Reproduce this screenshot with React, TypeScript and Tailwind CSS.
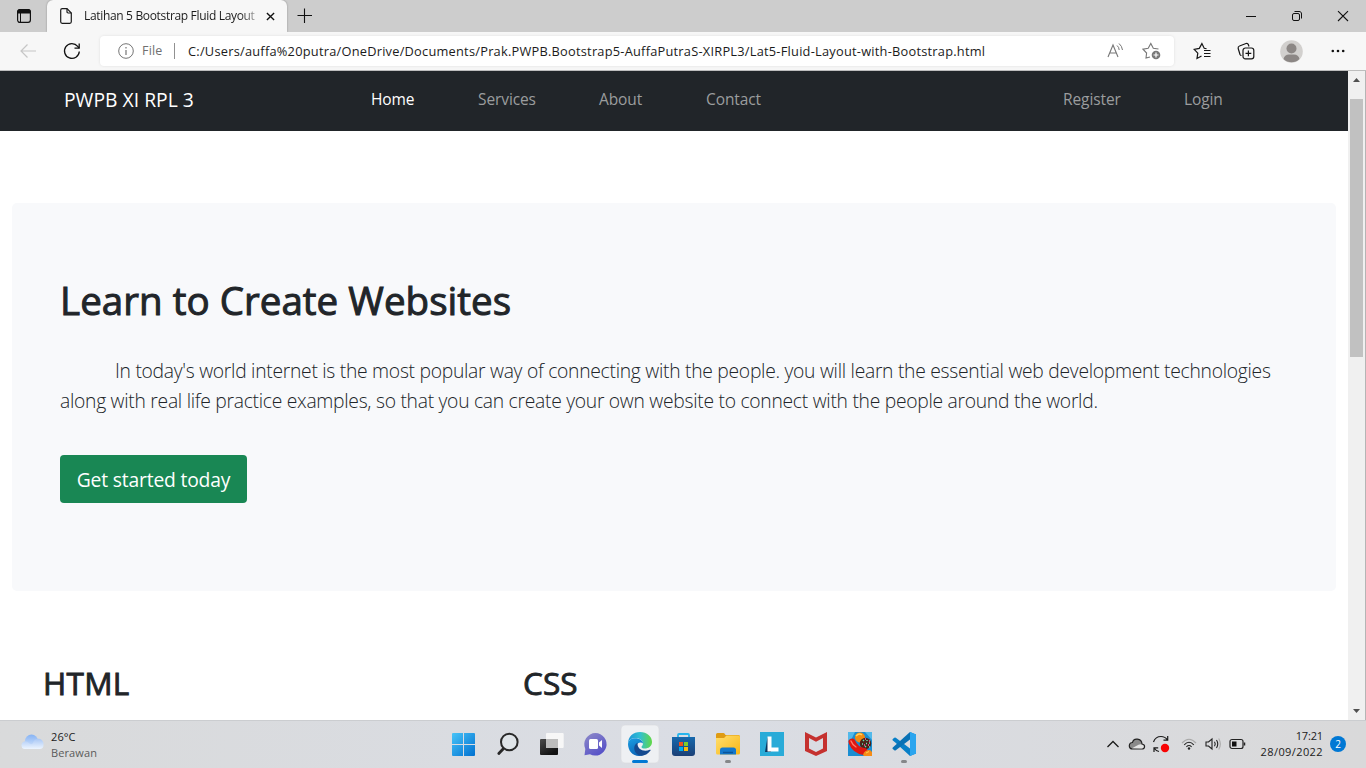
import React from "react";

function TabStrip() {
  return (
    <div className="flex h-8 items-start bg-[#cdcdcd]">
      <div className="flex h-8 w-[47px] items-center justify-center">
        <svg width="16" height="16" viewBox="0 0 16 16" fill="none" stroke="#111">
          <rect x="1.6" y="1.6" width="12.8" height="12.8" rx="2.3" strokeWidth="1.2" />
          <path d="M1.5 4.5C1.5 2.500 2.500 1.500 4 1.500H12C13.500 1.500 14.500 2.500 14.500 4.500V5H1.500Z" fill="#111" />
          <path d="M4.500 5V14" strokeWidth="1" />
        </svg>
      </div>
      <div className="flex h-8 w-[240px] items-center rounded-t-[6px] bg-[#f7f7f7] pl-3 shadow-[0_0_2px_rgba(0,0,0,0.35)]">
        <svg width="14" height="18" viewBox="0 0 14 18" fill="none" stroke="#1a1a1a" strokeWidth="1.2">
          <path d="M1.700 3.200C1.700 2.300 2.300 1.700 3.200 1.700H8L12.300 6V14.800C12.300 15.700 11.700 16.300 10.800 16.300H3.200C2.300 16.300 1.700 15.700 1.700 14.800Z" />
          <path d="M8 1.700V4.800C8 5.600 8.400 6 9.200 6H12.300" />
        </svg>
        <span className="ml-[11px] w-[173px] overflow-hidden bg-gradient-to-r from-[#1b1b1b] from-90% to-[#b8b8b8] bg-clip-text text-[12px] tracking-[-0.33px] whitespace-nowrap text-transparent">
          Latihan 5 Bootstrap Fluid Layout
        </span>
        <svg className="ml-[9px]" width="9" height="9" viewBox="0 0 10 10" stroke="#111" strokeWidth="1.500">
          <path d="M1 1L9 9M9 1L1 9" />
        </svg>
      </div>
      <svg className="mt-2 ml-[10px]" width="16" height="16" viewBox="0 0 16 16" stroke="#111" strokeWidth="1.1">
        <path d="M.500 7.500H15M7.500 .500V15" />
      </svg>
      <div className="ml-auto flex h-8 items-center">
        <svg width="46" height="32" viewBox="0 0 46 32" stroke="#111"><path d="M18 16.500H28" /></svg>
        <svg width="46" height="32" viewBox="0 0 46 32" fill="none" stroke="#111">
          <rect x="18.500" y="13.500" width="7" height="7" rx="1.500" />
          <path d="M20.500 11.500H25C26.700 11.500 27.500 12.300 27.500 14V18.500" />
        </svg>
        <svg width="46" height="32" viewBox="0 0 46 32" stroke="#111" strokeWidth="1.1"><path d="M18 11.200L28 21M28 11.200L18 21" /></svg>
      </div>
    </div>
  );
}

function Toolbar() {
  return (
    <div className="flex h-[39px] items-center border-b border-[#bdbdbd] bg-[#f7f7f7]">
      <svg className="ml-5" width="16" height="16" viewBox="0 0 16 16" fill="none" stroke="#c6c6c6" strokeWidth="1.2">
        <path d="M16 8H1M7.500 1.500L1 8L7.500 14.500" />
      </svg>
      <svg className="ml-[27px]" width="18" height="18" viewBox="0 0 18 18" fill="none" stroke="#111" strokeWidth="1.3">
        <path d="M16.300 9.500A7.400 7.400 0 1 1 14.700 4.400L16 6" />
        <path d="M16.200 1.500V6.200H11.500" />
      </svg>
      <div className="ml-[19px] flex h-[30px] w-[1074px] items-center rounded-[4px] bg-white shadow-[0_0_3px_rgba(0,0,0,0.1)]">
        <svg className="ml-[18px]" width="16" height="16" viewBox="0 0 16 16" fill="none" stroke="#757575">
          <circle cx="8" cy="8" r="7.300" />
          <path d="M8 7V12M8 4V5.400" strokeWidth="1.200" />
        </svg>
        <span className="ml-2 w-8 pt-px text-[12.500px] tracking-[0.2px] text-[#707070]">File</span>
        <span className="h-4 w-px bg-[#919191]" />
        <span className="ml-[13px] w-[799px] pt-px text-[12.8px] tracking-[0.24px] whitespace-nowrap text-[#1b1b1b]">
          C:/Users/auffa%20putra/OneDrive/Documents/Prak.PWPB.Bootstrap5-AuffaPutraS-XIRPL3/Lat5-Fluid-Layout-with-Bootstrap.html
        </span>
        <svg className="ml-[120px]" width="17" height="18" viewBox="0 0 17 18" fill="none" stroke="#777">
          <path d="M1 15L6 3L11 15M2.800 11H9.200" strokeWidth="1.1" />
          <path d="M10 3.500Q12 5 12.200 8M12 1.500Q15 4 15.500 8" />
        </svg>
        <svg className="ml-[18px]" width="19" height="18" viewBox="0 0 19 18" fill="none" stroke="#777">
          <path d="M8 15L4 16L4.600 11L1 7.200L6.200 6.300L8.800 1.500L11.300 6.300L16.500 7" strokeWidth="1.100" />
          <circle cx="14" cy="13" r="4.300" fill="#777" stroke="none" />
          <path d="M11.500 13H16.500M14 10.500V15.500" stroke="#fff" strokeWidth="1.200" />
        </svg>
      </div>
      <svg className="ml-[19px]" width="19" height="18" viewBox="0 0 19 18" fill="none" stroke="#151515" strokeWidth="1.200">
        <path d="M8.500 14L4 16.500L4.800 11.200L1.200 7.300L6.300 6.400L8.900 1.600L11.200 6.300L13.500 6.700M11 8.500H17.500M11 11.500H17.500M11 14.500H17.500" />
      </svg>
      <svg className="ml-[25px]" width="18" height="18" viewBox="0 0 18 18" fill="none" stroke="#151515" strokeWidth="1.200">
        <path d="M4.500 13.500Q3.500 13.500 3 12.500L1.200 6.500Q.800 4.500 2.500 4L9 1.500Q10.800 1 11.300 2.500L12 4.500" />
        <rect x="6" y="6" width="10.800" height="10.800" rx="2.400" />
        <path d="M8.500 11.400H14.300M11.400 8.500V14.300" />
      </svg>
      <svg className="ml-[25px]" width="23" height="23" viewBox="0 0 23 23">
        <circle cx="11.500" cy="11.500" r="11.300" fill="#d2d0ce" />
        <circle cx="11.500" cy="8.500" r="5" fill="#8c8785" />
        <path d="M3.500 19Q4.500 14.500 9 14.500H14Q18.500 14.500 19.500 19A11.300 11.300 0 0 1 3.500 19Z" fill="#8c8785" />
      </svg>
      <svg className="ml-7" width="14" height="4" viewBox="0 0 14 4" fill="#111">
        <circle cx="1.800" cy="2" r="1.300" /><circle cx="7" cy="2" r="1.300" /><circle cx="12.200" cy="2" r="1.300" />
      </svg>
    </div>
  );
}

function Navbar() {
  return (
    <nav className="flex h-[60px] shrink-0 items-center bg-[#212529] pb-[2px] pl-16 text-[15.500px] tracking-[-0.1px] whitespace-nowrap text-[#9b9d9e]">
      <a className="w-[307px] text-[19.300px] tracking-[0.02px] text-white">PWPB XI RPL 3</a>
      <a className="w-[107px] text-white">Home</a>
      <a className="w-[121px]">Services</a>
      <a className="w-[107px]">About</a>
      <a className="w-[357px]">Contact</a>
      <a className="w-[121px]">Register</a>
      <a>Login</a>
    </nav>
  );
}

function PageContent() {
  return (
    <main className="flex min-w-0 flex-1 flex-col overflow-hidden bg-white text-[#212529]">
      <Navbar />
      <section className="mt-[72px] mr-3 ml-3 h-[388px] shrink-0 rounded-[5px] bg-[#f8f9fb] px-12 pt-[73px]">
        <h1 className="text-[38.500px] leading-[48px] tracking-[0.04px] whitespace-nowrap [-webkit-text-stroke:1px_#212529]">
          Learn to Create Websites
        </h1>
        <p className="mt-[32px] text-[19.300px] leading-[30px] font-light whitespace-nowrap">
          <span className="ml-[55px] tracking-[-0.279px]">
            In today's world internet is the most popular way of connecting with the people. you will learn the essential web development technologies
          </span>
          <br />
          <span className="tracking-[-0.279px]">
            along with real life practice examples, so that you can create your own website to connect with the people around the world.
          </span>
        </p>
        <button className="mt-[39px] flex h-12 w-[187px] items-center justify-center rounded-[4px] bg-[#198754] pt-[2px] text-[19.300px] tracking-[-0.180px] whitespace-nowrap text-white">
          Get started today
        </button>
      </section>
      <div className="mt-[71px] flex pl-[43px] text-[31.500px] leading-[42px] [-webkit-text-stroke:0.9px_#212529]">
        <h2 className="w-[480px] tracking-[0.300px]">HTML</h2>
        <h2 className="tracking-[0.100px]">CSS</h2>
      </div>
    </main>
  );
}

function Scrollbar() {
  return (
    <div className="flex w-[18px] flex-col items-center border-r border-[#b5b5b5] bg-[#f0f0f0]">
      <svg width="17" height="28" viewBox="0 0 17 28" fill="#505050"><path d="M5 11L8.500 7L12 11Z" /></svg>
      <div className="h-[258px] w-[13px] bg-[#c1c1c1]" />
      <svg className="mt-auto" width="17" height="17" viewBox="0 0 17 17" fill="#505050"><path d="M5 6L8.500 10L12 6Z" /></svg>
    </div>
  );
}

function AppIcon({ children }: { children: React.ReactNode }) {
  return <svg width="44" height="48" viewBox="0 0 44 48" fill="none">{children}</svg>;
}

function TaskbarApps() {
  return (
    <div className="flex w-[484px]">
      <AppIcon>
        <defs>
          <linearGradient id="win" x1="10" y1="13" x2="33" y2="36" gradientUnits="userSpaceOnUse"><stop stopColor="#48c4f8" /><stop offset="1" stopColor="#0070d0" /></linearGradient>
        </defs>
        <path d="M11 13H21V24H10V14Q10 13 11 13ZM22 13H32Q33 13 33 14V24H22ZM10 25H21V36H11Q10 36 10 35ZM22 25H33V35Q33 36 32 36H22Z" fill="url(#win)" />
      </AppIcon>
      <AppIcon>
        <circle cx="23.300" cy="22" r="8.300" fill="#dfe4e8" stroke="#282828" strokeWidth="2" />
        <path d="M17.300 28.700L12.800 33.500" stroke="#282828" strokeWidth="2.800" strokeLinecap="round" />
      </AppIcon>
      <AppIcon>
        <defs>
          <linearGradient id="tv" x1="10" y1="19" x2="20" y2="35" gradientUnits="userSpaceOnUse"><stop stopColor="#4b4b4b" /><stop offset="1" stopColor="#111" /></linearGradient>
        </defs>
        <rect x="16" y="13" width="17.700" height="15" rx="1" fill="#f7f7f7" />
        <rect x="10" y="19" width="18" height="16" rx="1" fill="url(#tv)" />
        <rect x="16" y="19" width="12" height="9" fill="#bcbcbc" />
      </AppIcon>
      <AppIcon>
        <defs>
          <linearGradient id="chat" x1="14" y1="13" x2="29" y2="36" gradientUnits="userSpaceOnUse"><stop stopColor="#8b87c8" /><stop offset="1" stopColor="#504bc8" /></linearGradient>
        </defs>
        <path d="M21.500 13A11.300 11.300 0 1 1 16 34.300L10.500 35.300L11.300 29A11.300 11.300 0 0 1 21.500 13Z" fill="url(#chat)" />
        <rect x="15" y="19" width="9" height="10" rx="1.500" fill="#fff" />
        <path d="M25 22.500L28 20V28L25 25.500Z" fill="#fff" />
      </AppIcon>
      <AppIcon>
        <defs>
          <linearGradient id="eg1" x1="10" y1="20" x2="34" y2="20" gradientUnits="userSpaceOnUse"><stop stopColor="#1d95d7" /><stop offset=".5" stopColor="#31bfd2" /><stop offset="1" stopColor="#61d844" /></linearGradient>
          <linearGradient id="eg2" x1="12" y1="18" x2="20" y2="36" gradientUnits="userSpaceOnUse"><stop stopColor="#1b9de2" /><stop offset="1" stopColor="#0962b5" /></linearGradient>
        </defs>
        <rect x="3" y="5" width="38" height="38" rx="4" fill="#eef0f3" stroke="#d8dade" strokeWidth=".6" />
        <path d="M10 24C10 16 15.500 12 22 12C29 12 34 16.500 34 22C34 26.500 30 28.500 27 28.500C25 28.500 23.500 28 23.500 27C23.500 26 25 25.500 25 23.500C25 20 21 18 17 18C13 18 10.500 20.500 10 24Z" fill="url(#eg1)" />
        <path d="M10 24C10.500 20 13.500 18.300 17 18.300C22 18.300 25 21 25 23.500C23 21.500 18.500 22.500 18.500 27C18.500 31 22 35 26 35C17 38.500 10 32 10 24Z" fill="url(#eg2)" />
        <path d="M19.500 22.800C15 25 15.500 31 19 34C22.500 37 28.500 36 32.500 30.500C33 29.800 32.300 29.500 31.700 29.800C26 32.500 19 29.500 19.500 22.800Z" fill="#14498f" />
        <rect x="14" y="40" width="16" height="3" rx="1.500" fill="#0078d4" />
      </AppIcon>
      <AppIcon>
        <defs>
          <linearGradient id="store" x1="20" y1="17" x2="20" y2="36" gradientUnits="userSpaceOnUse"><stop stopColor="#1769ad" /><stop offset="1" stopColor="#1b3f76" /></linearGradient>
        </defs>
        <path d="M16 18V15Q16 14 17 14H26Q27 14 27 15V18" stroke="#26b5ed" strokeWidth="1.800" />
        <path d="M10 17H33V33Q33 36 30 36H13Q10 36 10 33Z" fill="url(#store)" />
        <path d="M17 22H21V26H17Z" fill="#f1511b" /><path d="M22 22H26V26H22Z" fill="#80cc28" /><path d="M17 27H21V31H17Z" fill="#00adef" /><path d="M22 27H26V31H22Z" fill="#fbbc09" />
      </AppIcon>
      <AppIcon>
        <defs>
          <linearGradient id="fold" x1="14" y1="15" x2="30" y2="35" gradientUnits="userSpaceOnUse"><stop stopColor="#ffdc68" /><stop offset="1" stopColor="#f9b91c" /></linearGradient>
        </defs>
        <path d="M10 14.500Q10 13 11.500 13H17.500Q18.500 13 19.500 15H32.500Q34 15 34 16.500V20H10Z" fill="#df9b13" />
        <path d="M10 18H18L20.500 15.500H32.500Q34 15.500 34 17V33Q34 34.500 32.500 34.500H11.500Q10 34.500 10 33Z" fill="url(#fold)" />
        <path d="M14 34.500V30Q14 27.500 16.500 27.500H27.500Q30 27.500 30 30V34.500Z" fill="#1478cc" />
        <path d="M17 32.500H27" stroke="#0a559b" strokeWidth="1.500" />
        <rect x="19" y="40" width="6" height="3" rx="1.500" fill="#858789" />
      </AppIcon>
      <AppIcon>
        <rect x="10" y="12" width="24" height="24" fill="#29abd8" />
        <path d="M17.500 17L15 32H21Z" fill="#0c355e" />
        <path d="M17.500 16.500H21.500V27.500H28.500V31.500H17.500Z" fill="#fff" />
      </AppIcon>
      <AppIcon>
        <path d="M11 12L22 17.500L33 12V31L22 36L11 31ZM15 18V28.500L22 32L29 28.500V18L22 21.800Z" fill="#c5312f" fillRule="evenodd" />
      </AppIcon>
      <AppIcon>
        <rect x="10" y="12" width="24" height="24" fill="#1a8ed2" />
        <path d="M10 12H17L12 22L10 24ZM27 12H34V20Z" fill="#53b9ea" />
        <circle cx="22" cy="17.500" r="5" fill="#f38b12" /><path d="M18 16Q21 12.500 24 15" stroke="#ffd35a" strokeWidth="1.500" />
        <circle cx="27.500" cy="23.500" r="5.700" fill="#4a2519" />
        <path d="M14 22Q17 30 26 31.500" stroke="#df1710" strokeWidth="7" strokeLinecap="round" />
        <path d="M13 21Q14.500 25 18 27" stroke="#ff7969" strokeWidth="1.400" strokeLinecap="round" />
        <path d="M25 20L26 21M29 20V21M31 23H32M24 24H25M28 23.500H29M27 27L28 26M31 27H32" stroke="#69ddb0" strokeWidth="1.400" />
        <path d="M27 19H28M31 21H32M26 25H27M30 25H31" stroke="#ff5bb0" strokeWidth="1.300" />
        <path d="M25 35Q26 30 32 30L34 32V36H26Z" fill="#f68c17" /><path d="M28 33L31 31.500" stroke="#ffd050" />
      </AppIcon>
      <AppIcon>
        <path d="M28 12L34 14.500V33.500L28 36L13 22.200L10.800 20.500Q10 19.700 10.800 19L12.300 17.700Q13 17.200 13.800 17.700L28 28.500V19.500Z" fill="#087fc7" />
        <path d="M28 12L10.800 27.500Q10 28.300 10.800 29L12.300 30.300Q13 30.800 13.800 30.300L28 19.500Z" fill="#0871b5" />
        <path d="M28 12L34 14.500V33.500L28 36Z" fill="#2ba5ef" />
        <rect x="19" y="40" width="6" height="3" rx="1.500" fill="#858789" />
      </AppIcon>
    </div>
  );
}

function Tray() {
  return (
    <div className="ml-auto flex items-center pr-5">
      <svg width="14" height="10" viewBox="0 0 14 10" fill="none" stroke="#1b1b1b" strokeWidth="1.300"><path d="M1.500 8L7 2.500L12.500 8" /></svg>
      <svg className="ml-2" width="18" height="14" viewBox="0 0 18 14" stroke="#222">
        <path d="M4.500 12H13.500C17.500 12 17.500 7.500 14 7C13.500 1 5.500 .500 4.500 5.500C.500 5.500 0 12 4.500 12Z" fill="#8a8a8a" strokeWidth="1.200" />
        <path d="M4 11.300L10.500 7.800Q12.500 6.800 14 7.700Q16.500 8.500 15.500 10.500Q15 11.400 13.500 11.400Z" fill="#e4e4e4" stroke="none" />
      </svg>
      <svg className="ml-[6px]" width="18" height="20" viewBox="0 0 18 20" fill="none" stroke="#1b1b1b" strokeWidth="1.200">
        <path d="M1.500 8Q3.500 2.500 9 2.500Q13 2.500 15.500 6M15.700 2V6.200H11.500M2 18V13.800H6.200M2 14Q4 17 7 17.500" />
        <circle cx="13" cy="14" r="4.200" fill="#f80303" stroke="none" />
      </svg>
      <svg className="ml-[11px]" width="16" height="14" viewBox="0 0 16 14" fill="none" stroke="#222" strokeWidth="1.100">
        <path d="M1 6Q8 -1.500 15 6" stroke="#a9a9a9" /><path d="M3.200 7.800Q8 2.800 12.800 7.800M5.400 9.800Q8 7.200 10.600 9.800" /><circle cx="8" cy="11.500" r="1.200" fill="#222" stroke="none" />
      </svg>
      <svg className="ml-2" width="17" height="14" viewBox="0 0 17 14" fill="none" stroke="#222" strokeWidth="1.100">
        <path d="M1 5H3.500L7 2V12L3.500 9H1ZM9.500 4.800Q11 7 9.500 9.200M11.500 3Q14 7 11.500 11" /><path d="M13.700 1.500Q17 7 13.700 12.500" stroke="#aaa" />
      </svg>
      <svg className="ml-[7px]" width="17" height="12" viewBox="0 0 17 12" fill="none" stroke="#222" strokeWidth="1.200">
        <rect x="1" y="1.500" width="13" height="9" rx="2" /><path d="M3 3.500H7.500V8.500H3Z" fill="#111" stroke="none" /><path d="M15.500 4.500V7.500" strokeWidth="1.500" />
      </svg>
      <div className="w-[77px] text-right text-[11px] leading-[16px] text-[#202020]">
        <div className="tracking-[-0.150px]">17:21</div>
        <div className="tracking-[0.400px]">28/09/2022</div>
      </div>
      <div className="ml-[7px] flex size-4 items-center justify-center rounded-full bg-[#0078d4] text-[10px] text-white">2</div>
    </div>
  );
}

function Taskbar() {
  return (
    <footer className="flex h-12 shrink-0 border-t border-[#cbcdd0] bg-gradient-to-r from-[#d9dadb] via-[#dadde4] to-[#d9d9da]">
      <div className="-mt-px flex h-12 w-[442px] items-center pl-[19px]">
        <svg className="-mt-1" width="26" height="18" viewBox="0 0 26 18">
          <defs>
            <linearGradient id="cl" x1="0" y1="0" x2="0" y2="1"><stop stopColor="#86b3f4" /><stop offset="1" stopColor="#d3e3fb" /></linearGradient>
            <linearGradient id="cl2" x1="0" y1="0" x2="0" y2="1"><stop stopColor="#a9c7f5" /><stop offset="1" stopColor="#edf5ff" /></linearGradient>
          </defs>
          <circle cx="12.500" cy="8" r="6.500" fill="url(#cl)" />
          <path d="M5 16A4 4 0 0 1 5 8.500Q8 7.500 10.500 10.500Q13 12 14 10A5 5 0 0 1 24.500 12Q24.500 16 20.500 16Z" fill="url(#cl2)" />
        </svg>
        <div className="ml-[6px] pt-px text-[11px] leading-[16px] tracking-[0.100px]">
          <div className="text-[#1b1b1b]">26°C</div>
          <div className="text-[#5b5b5b]">Berawan</div>
        </div>
      </div>
      <div className="-mt-px flex h-12"><TaskbarApps /></div>
      <div className="-mt-px ml-auto flex h-12 items-center"><Tray /></div>
    </footer>
  );
}

export default function App() {
  return (
    <div className="flex h-[768px] w-[1366px] flex-col overflow-hidden font-['Open_Sans','Noto_Sans',sans-serif]">
      <TabStrip />
      <Toolbar />
      <div className="flex min-h-0 flex-1">
        <PageContent />
        <Scrollbar />
      </div>
      <Taskbar />
    </div>
  );
}
